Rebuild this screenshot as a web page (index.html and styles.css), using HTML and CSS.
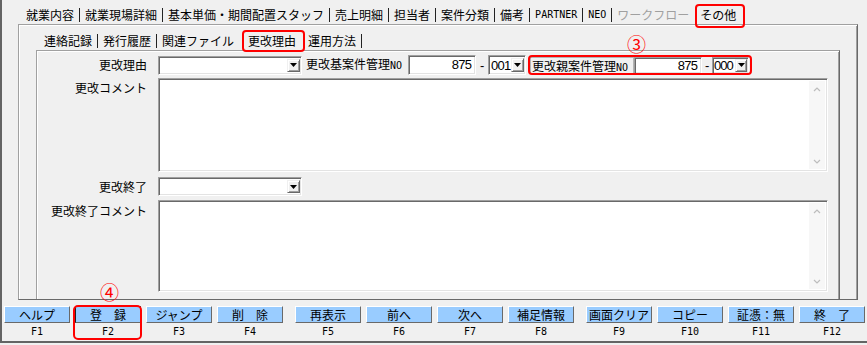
FILE: index.html
```html
<!DOCTYPE html>
<html lang="ja">
<head>
    <meta charset="UTF-8">
    <meta name="viewport" content="width=device-width, initial-scale=1.0">
    <title>案件管理 - その他</title>
    <link rel="stylesheet" href="styles.css">
</head>
<body>
<div class="window">
    <!-- main tab strip -->
    <div class="tabs main-tabs">
        <span class="tab">就業内容</span>
        <span class="tab">就業現場詳細</span>
        <span class="tab">基本単価・期間配置スタッフ</span>
        <span class="tab">売上明細</span>
        <span class="tab">担当者</span>
        <span class="tab">案件分類</span>
        <span class="tab">備考</span>
        <span class="tab latin">PARTNER</span>
        <span class="tab latin">NEO</span>
        <span class="tab disabled last">ワークフロー</span>
        <span class="tab active marked">その他</span>
    </div>

    <div class="panel outer">
        <div class="tabs sub-tabs">
            <span class="tab">連絡記録</span>
            <span class="tab">発行履歴</span>
            <span class="tab last">関連ファイル</span>
            <span class="tab active marked">更改理由</span>
            <span class="tab">運用方法</span>
        </div>

        <div class="panel inner">
            <div class="row row-first">
                <label class="caption">更改理由</label>
                <div class="fields">
                    <div class="combo combo-wide">
                        <span class="value"></span>
                        <span class="drop"><svg width="7" height="4" viewBox="0 0 7 4"><path d="M0 0H7L3.5 4Z"/></svg></span>
                    </div>
                    <span class="field-label">更改基案件管理<span class="latin">NO</span></span>
                    <div class="textbox num">875</div>
                    <span class="dash">-</span>
                    <div class="combo combo-short">
                        <span class="value">001</span>
                        <span class="drop"><svg width="7" height="4" viewBox="0 0 7 4"><path d="M0 0H7L3.5 4Z"/></svg></span>
                    </div>
                    <div class="group marked">
                        <span class="boxed-label">更改親案件管理<span class="latin">NO</span></span>
                        <div class="textbox num">875</div>
                        <span class="dash">-</span>
                        <div class="combo combo-short">
                            <span class="value">000</span>
                            <span class="drop"><svg width="7" height="4" viewBox="0 0 7 4"><path d="M0 0H7L3.5 4Z"/></svg></span>
                        </div>
                        <span class="callout callout-3">③</span>
                    </div>
                </div>
            </div>

            <div class="row row-memo">
                <label class="caption">更改コメント</label>
                <div class="memo memo-tall">
                    <div class="scrollbar">
                        <svg width="8" height="5" viewBox="0 0 8 5"><polyline points="1,4 4,1 7,4"/></svg>
                        <svg width="8" height="5" viewBox="0 0 8 5"><polyline points="1,1 4,4 7,1"/></svg>
                    </div>
                </div>
            </div>

            <div class="row row-end">
                <label class="caption">更改終了</label>
                <div class="combo combo-wide">
                    <span class="value"></span>
                    <span class="drop"><svg width="7" height="4" viewBox="0 0 7 4"><path d="M0 0H7L3.5 4Z"/></svg></span>
                </div>
            </div>

            <div class="row row-memo2">
                <label class="caption">更改終了コメント</label>
                <div class="memo memo-short">
                    <div class="scrollbar">
                        <svg width="8" height="5" viewBox="0 0 8 5"><polyline points="1,4 4,1 7,4"/></svg>
                        <svg width="8" height="5" viewBox="0 0 8 5"><polyline points="1,1 4,4 7,1"/></svg>
                    </div>
                </div>
            </div>
        </div>
    </div>

    <!-- function keys -->
    <div class="fkeys">
        <div class="fgroup">
            <div class="fkey"><div class="fbtn">ヘルプ</div><div class="flabel">F1</div></div>
            <div class="fkey marked focus"><div class="fbtn">登　録</div><div class="flabel">F2</div><span class="callout callout-4">④</span></div>
            <div class="fkey"><div class="fbtn">ジャンプ</div><div class="flabel">F3</div></div>
            <div class="fkey"><div class="fbtn">削　除</div><div class="flabel">F4</div></div>
        </div>
        <div class="fgroup">
            <div class="fkey"><div class="fbtn">再表示</div><div class="flabel">F5</div></div>
            <div class="fkey"><div class="fbtn">前へ</div><div class="flabel">F6</div></div>
            <div class="fkey"><div class="fbtn">次へ</div><div class="flabel">F7</div></div>
            <div class="fkey"><div class="fbtn">補足情報</div><div class="flabel">F8</div></div>
        </div>
        <div class="fgroup">
            <div class="fkey"><div class="fbtn">画面クリア</div><div class="flabel">F9</div></div>
            <div class="fkey"><div class="fbtn">コピー</div><div class="flabel">F10</div></div>
            <div class="fkey"><div class="fbtn">証憑：無</div><div class="flabel">F11</div></div>
            <div class="fkey"><div class="fbtn">終　了</div><div class="flabel">F12</div></div>
        </div>
    </div>
</div>
</body>
</html>
```

FILE: styles.css
```css
* {
    box-sizing: border-box;
}
body {
    margin: 0;
    width: 867px;
    height: 345px;
    overflow: hidden;
    background-color: #f0f0f0;
    font-family: "Noto Sans CJK JP", "Liberation Sans", sans-serif;
    font-size: 12px;
    color: #000;
}
.window {
    height: 343px;
    padding-top: 5px;
    border-left: 2px solid #646464;
    border-bottom: 2px solid #646464;
}
.latin {
    font-family: "DejaVu Sans Mono", monospace;
    font-size: 10px;
}

/* tab strips */
.tabs {
    display: flex;
    white-space: nowrap;
}
.tab {
    position: relative;
    padding: 0 5px;
    line-height: 14px;
    height: 14px;
    border-right: 1px solid #222;
}
.tab.last {
    border-right: none;
}
.tab.disabled {
    color: #a0a0a0;
}
.main-tabs {
    height: 19px;
    margin-left: 16px;
    padding-left: 3px;
    align-items: center;
}
.main-tabs .active {
    padding: 0 6px;
    border-right: none;
}
.main-tabs .active::after {
    top: -4px;
    bottom: -6px;
    left: 1px;
    right: -3px;
}
.sub-tabs {
    height: 25px;
    margin-left: 17px;
    padding-left: 3px;
    padding-bottom: 2px;
    align-items: flex-end;
}
.sub-tabs .active {
    padding: 0 7px 0 9px;
    border-right: none;
}
.sub-tabs .active::after {
    top: -4px;
    bottom: -4px;
    left: 3px;
    right: -2px;
}

/* red annotation boxes */
.marked {
    position: relative;
}
.marked::after {
    content: "";
    position: absolute;
    top: 0;
    bottom: 0;
    left: 0;
    right: 0;
    border: 2px solid #f00;
    border-radius: 4px;
    pointer-events: none;
}
.callout {
    position: absolute;
    color: #f00;
    font-size: 19px;
    line-height: 19px;
}
.callout-3 {
    left: 99px;
    top: -21px;
}
.callout-4 {
    left: 25px;
    top: -24px;
}

/* panels */
.panel {
    border-left: 1px solid #a0a0a0;
    border-top: 1px solid #a0a0a0;
    border-right: 1px solid #696969;
}
.outer {
    margin-left: 16px;
    width: 840px;
    height: 276px;
    border-bottom: 1px solid #696969;
    box-shadow: inset 1px 1px 0 #fff, inset -1px 0 0 #a0a0a0;
}
.inner {
    margin-left: 17px;
    width: 804px;
    height: 249px;
    padding-top: 4px;
    box-shadow: inset 1px 1px 0 #fff, inset -1px 0 0 #a0a0a0;
}

/* form rows */
.row {
    display: flex;
    align-items: flex-start;
}
.caption {
    flex: 0 0 113px;
    margin-right: 8px;
    padding-right: 3px;
    text-align: right;
    line-height: 14px;
    white-space: nowrap;
}
.row-first {
    height: 20px;
    align-items: center;
}
.row-memo {
    margin-top: 3px;
}
.row-memo .caption {
    padding-top: 3px;
}
.row-end {
    margin-top: 5px;
    height: 19px;
    align-items: center;
}
.row-memo2 {
    margin-top: 4px;
}
.row-memo2 .caption {
    padding-top: 4px;
}
.fields {
    display: flex;
    align-items: center;
    height: 20px;
}
.field-label {
    margin-left: 4px;
    margin-right: 6px;
    white-space: nowrap;
    line-height: 14px;
}

/* sunken controls */
.textbox,
.combo,
.memo {
    background-color: #fff;
    border: 1px solid;
    border-color: #a0a0a0 #fff #fff #a0a0a0;
    box-shadow: inset 1px 1px 0 #696969, inset -1px -1px 0 #e3e3e3;
}
.textbox {
    width: 68px;
    height: 20px;
}
.num,
.combo .value {
    font-family: "Liberation Sans", sans-serif;
    font-size: 13px;
    letter-spacing: -0.8px;
    line-height: 18px;
}
.num {
    text-align: right;
    padding-right: 4px;
}
.dash {
    width: 12px;
    text-align: center;
    font-family: "Liberation Sans", sans-serif;
    font-size: 13px;
}
.combo {
    display: flex;
    height: 20px;
    padding: 2px 1px 2px 2px;
}
.combo .value {
    flex: 1;
    line-height: 15px;
    overflow: hidden;
    white-space: nowrap;
}
.combo .drop {
    flex: 0 0 13px;
    display: flex;
    align-items: center;
    justify-content: center;
    background-color: #f0f0f0;
    border: 1px solid;
    border-color: #f0f0f0 #696969 #696969 #f0f0f0;
    box-shadow: inset 1px 1px 0 #fff, inset -1px -1px 0 #a0a0a0;
}
.drop svg {
    fill: #000;
}
.combo-wide {
    width: 144px;
    height: 19px;
}
.combo-short {
    width: 38px;
}

/* red group on row 1 */
.group {
    display: flex;
    align-items: center;
    height: 20px;
    margin-left: 2px;
    padding: 0 3px 0 2px;
}
.boxed-label {
    width: 104px;
    height: 17px;
    padding-left: 1px;
    line-height: 15px;
    border: 1px solid #b4b4b4;
    white-space: nowrap;
}
.group .textbox {
    width: 68px;
    height: 17px;
}
.group .num {
    line-height: 15px;
}
.group .dash {
    width: 10px;
}
.group .combo {
    width: 37px;
    height: 17px;
    padding: 1px 1px 1px 1px;
}
.group .combo .value {
    line-height: 14px;
    letter-spacing: -1px;
}
.group .combo .drop {
    flex-basis: 12px;
}

/* memo boxes */
.memo {
    width: 670px;
    display: flex;
    justify-content: flex-end;
    padding: 2px;
}
.memo-tall {
    height: 94px;
}
.memo-short {
    height: 92px;
}
.scrollbar {
    width: 16px;
    display: flex;
    flex-direction: column;
    justify-content: space-between;
    align-items: center;
    padding: 6px 0 5px;
    background-color: #f7f7f7;
}
.scrollbar svg {
    fill: none;
    stroke: #bdbdbd;
    stroke-width: 1.2;
}

/* function keys */
.fkeys {
    display: flex;
    margin-top: 6px;
    padding-left: 2px;
}
.fgroup {
    display: flex;
    gap: 5px;
    margin-right: 12px;
}
.fkey {
    width: 66px;
    display: flex;
    flex-direction: column;
}
.fkey.marked::after {
    top: -1px;
    bottom: -2px;
    left: -2px;
    right: -1px;
    border-radius: 5px;
}
.fbtn {
    height: 17px;
    line-height: 15px;
    text-align: center;
    white-space: nowrap;
    background-color: #99ccff;
    border: 1px solid;
    border-color: #fff #696969 #696969 #fff;
}
.focus .fbtn {
    border-color: #222 #696969 #696969 #222;
}
.flabel {
    margin-top: 3px;
    line-height: 12px;
    text-align: center;
    font-family: "DejaVu Sans Mono", monospace;
    font-size: 10px;
}
```
